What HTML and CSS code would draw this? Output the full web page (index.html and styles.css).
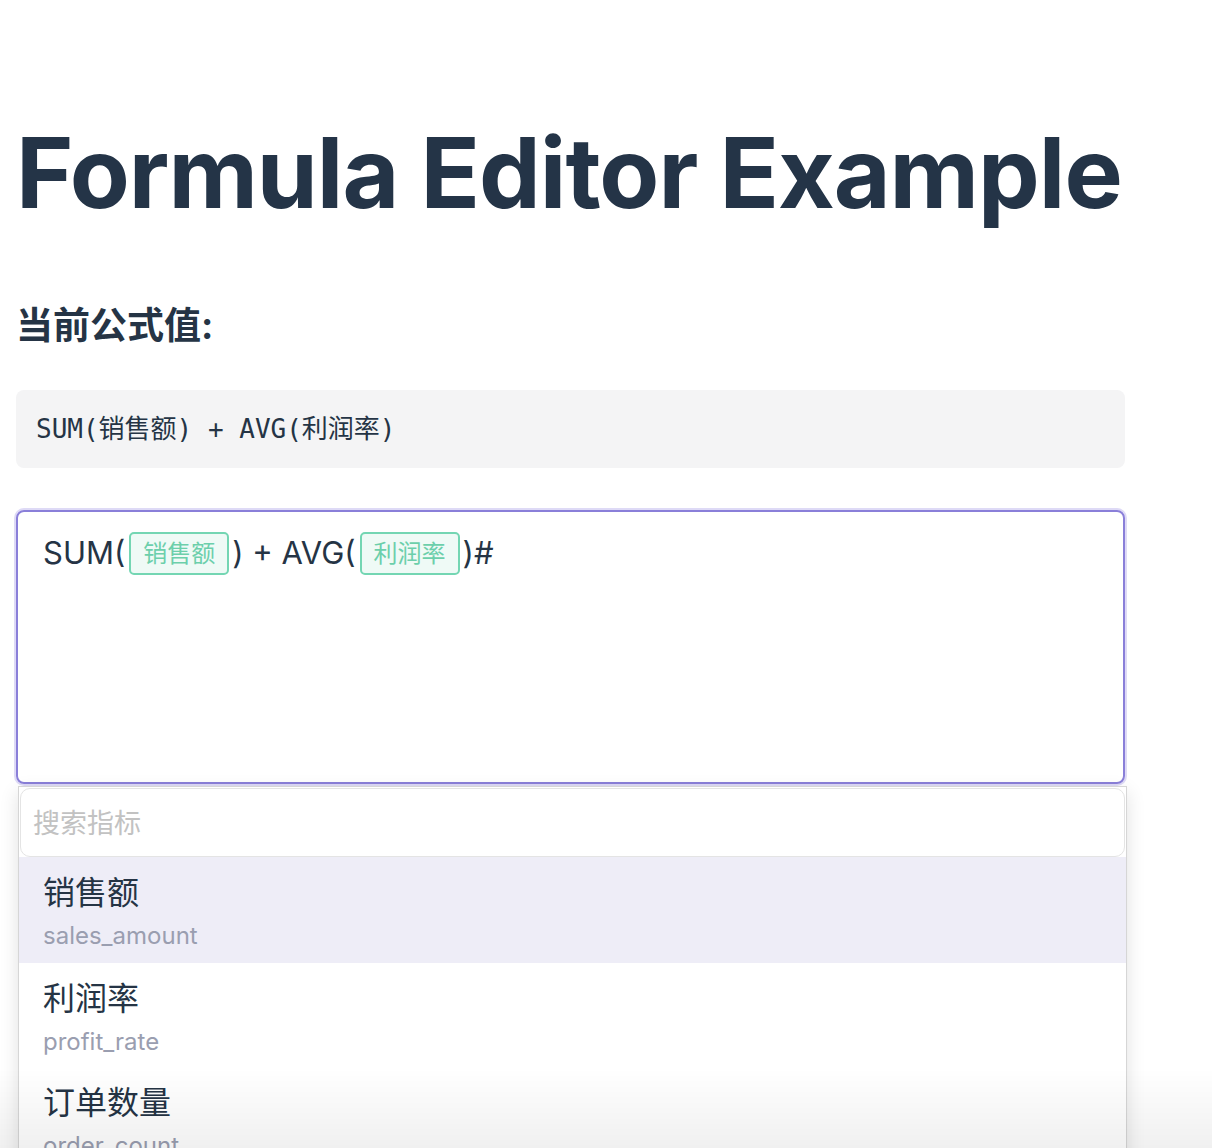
FILE: index.html
```html
<!DOCTYPE html>
<html lang="zh">
<head>
<meta charset="utf-8">
<title>Formula Editor Example</title>
<link rel="stylesheet" href="styles.css">
</head>
<body>
<main class="page">
  <h1 class="title">Formula Editor Example</h1>
  <h2 class="subtitle">当前公式值:</h2>
  <pre class="value">SUM(销售额) + AVG(利润率)</pre>
  <div class="editor-wrap">
    <div class="editor">SUM(<span class="tag">销售额</span>) + AVG(<span class="tag">利润率</span>)#</div>
    <div class="dropdown">
      <div class="search">搜索指标</div>
      <ul class="list">
        <li class="item active"><div class="name">销售额</div><div class="code">sales_amount</div></li>
        <li class="item"><div class="name">利润率</div><div class="code">profit_rate</div></li>
        <li class="item"><div class="name">订单数量</div><div class="code">order_count</div></li>
      </ul>
    </div>
  </div>
</main>
<div class="fade"></div>
</body>
</html>
```
FILE: styles.css
```css
html, body { margin: 0; padding: 0; background: #fff; }
body {
  font-family: Inter, "Noto Sans CJK SC", sans-serif;
  color: #253445;
  padding: 0 16px;
  overflow: hidden;
  height: 1148px;
}
.page { width: 1109px; }
.title {
  margin: 113px 0 0;
  font-size: 98px;
  line-height: 120px;
  font-weight: 700;
  color: #243447;
  letter-spacing: -1px;
  white-space: nowrap;
}
.subtitle {
  margin: 71px 0 0;
  font-size: 37px;
  line-height: 44px;
  font-weight: 700;
  color: #253445;
}
.value {
  margin: 42px 0 0;
  background: #f4f4f5;
  border-radius: 8px;
  padding: 20px 20px;
  font-family: "DejaVu Sans Mono", "Noto Sans CJK SC", monospace;
  font-size: 26px;
  line-height: 38px;
  color: #253445;
}
.editor-wrap { position: relative; margin-top: 42px; }
.editor {
  box-sizing: border-box;
  height: 274px;
  border: 2px solid #8a7fd9;
  border-radius: 8px;
  box-shadow: 0 0 0 2px #dedaf6;
  padding: 19px 25px;
  font-size: 31px;
  line-height: 44px;
  color: #253445;
}
.tag {
  display: inline-block;
  box-sizing: border-box;
  height: 43px;
  line-height: 39px;
  padding: 0 12px;
  margin: 0 3px 0 4px;
  border: 2px solid #74d6b3;
  border-radius: 5px;
  background: #effaf6;
  color: #6ccfab;
  font-size: 24px;
  vertical-align: top;
  position: relative;
  top: 1px;
}
.dropdown {
  position: absolute;
  top: calc(100% + 2px);
  left: 2px;
  width: 1109px;
  box-sizing: border-box;
  background: #fff;
  border: 1px solid #d6d6d6;
  border-bottom: none;
  box-shadow: 0 6px 18px rgba(0,0,0,0.12);
}
.search {
  box-sizing: border-box;
  height: 69px;
  margin: 1px 1px 0;
  border: 1px solid #e4e4e4;
  border-radius: 10px;
  padding: 0 12px;
  font-size: 27px;
  line-height: 69px;
  color: #c2c2c2;
}
.list { list-style: none; margin: 0; padding: 0; }
.item {
  height: 104px;
  box-sizing: border-box;
  padding: 14px 24px 0;
}
.item.active { background: #eeedf7; height: 106px; }
.name { font-size: 32px; line-height: 44px; color: #253445; }
.code { margin-top: 6px; font-size: 24px; line-height: 30px; color: #9a9eb0; }
.fade {
  position: fixed;
  left: 0; right: 0; bottom: 0;
  height: 80px;
  background: linear-gradient(to bottom, rgba(0,0,0,0), rgba(0,0,0,0.06));
  pointer-events: none;
}
```
